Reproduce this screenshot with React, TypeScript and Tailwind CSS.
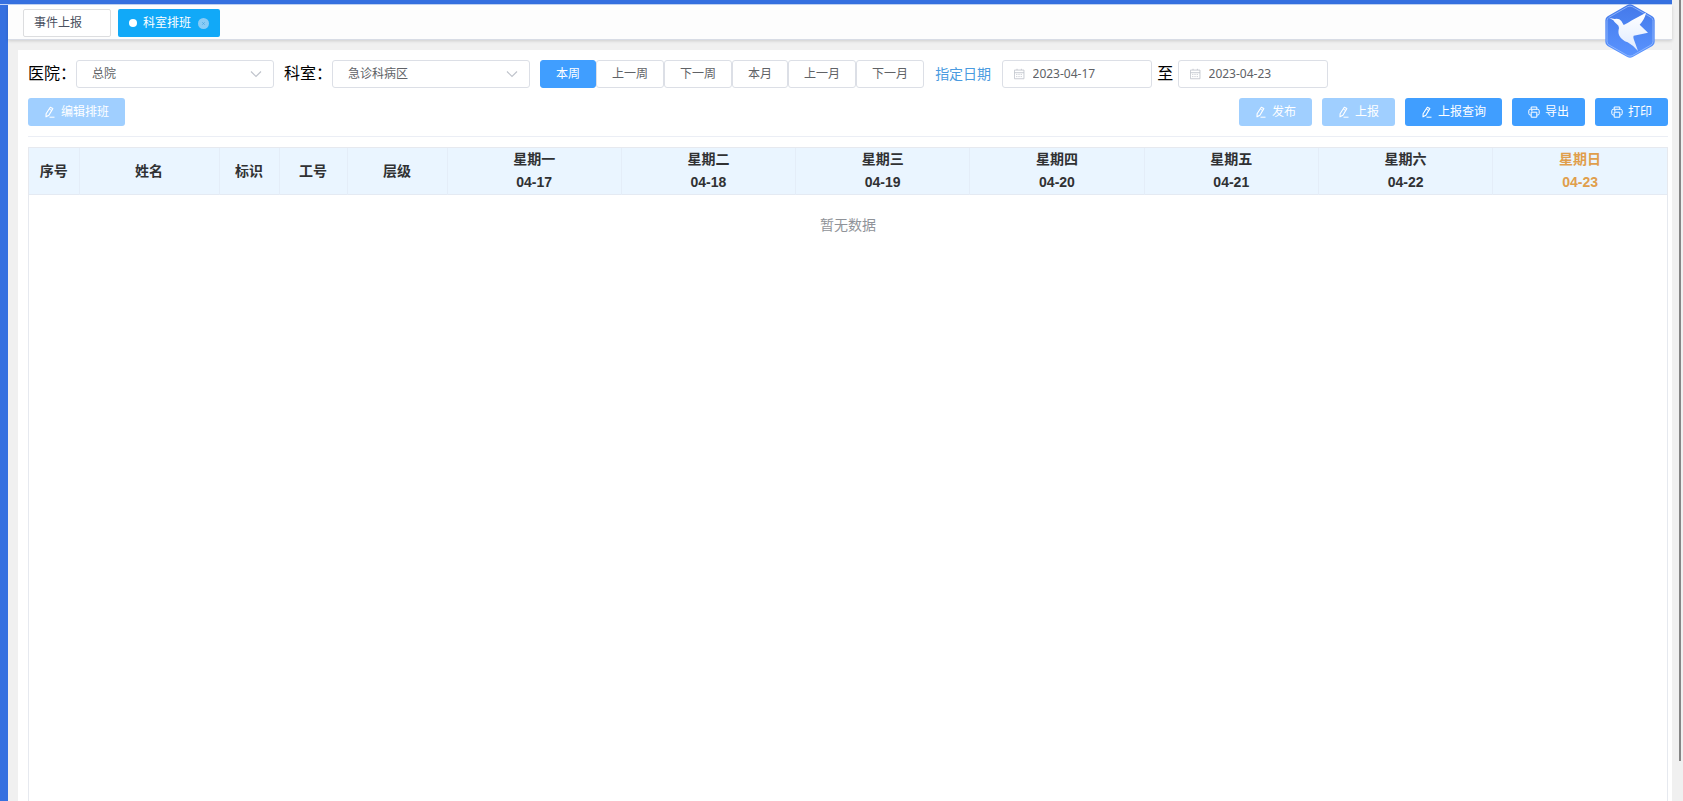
import { useState } from "react";
import type { ReactNode } from "react";

type Day = { week: string; date: string; rest?: boolean };

const DAYS: Day[] = [
  { week: "星期一", date: "04-17" },
  { week: "星期二", date: "04-18" },
  { week: "星期三", date: "04-19" },
  { week: "星期四", date: "04-20" },
  { week: "星期五", date: "04-21" },
  { week: "星期六", date: "04-22" },
  { week: "星期日", date: "04-23", rest: true },
];

const BASE_COLS = [
  { title: "序号", width: "w-[50px]" },
  { title: "姓名", width: "w-[140px]" },
  { title: "标识", width: "w-[60px]" },
  { title: "工号", width: "w-[68px]" },
  { title: "层级", width: "w-[100px]" },
];

const RANGES = ["本周", "上一周", "下一周", "本月", "上一月", "下一月"];

function EditIcon() {
  return (
    <svg viewBox="0 0 12 12" className="size-3" fill="none" stroke="currentColor" strokeLinejoin="round">
      <path d="M6.3 1.2 8.8 2.6 4.9 9.2 2 10.8 2.1 7.8Z" strokeWidth="1.1" />
      <path d="M5.4 3.2 7.8 4.5M5.5 11.2H10.5" />
    </svg>
  );
}

function PrinterIcon() {
  return (
    <svg viewBox="0 0 12 12" className="size-3" fill="none" stroke="currentColor" strokeLinejoin="round">
      <path d="M3.2 3.3V1h5.6v2.3M3.2 9H2.3Q.8 9 .8 7.5V4.8Q.8 3.3 2.3 3.3h7.4q1.5 0 1.5 1.5v2.7Q11.2 9 9.7 9h-.9" />
      <path d="M3.2 6.2h5.6v5H3.2zM3 4.8h1.6" />
    </svg>
  );
}

function CalendarIcon() {
  return (
    <svg viewBox="0 0 12 12" className="size-3" fill="none" stroke="currentColor">
      <path d="M.5 1.5h11v10H.5zM.5 4.5h11" />
      <path d="M3.5 0v2.5M8.5 0v2.5M2.5 6.5h7M2.5 9h7" strokeDasharray="1.4 1.2" />
    </svg>
  );
}

function Logo() {
  return (
    <svg viewBox="0 0 150 162" className="h-[54px] w-[50px]">
      <defs>
        <linearGradient id="hex" x1="0" y1="0" x2="0" y2="1">
          <stop offset="0" stopColor="#4479ea" />
          <stop offset="1" stopColor="#5a94ff" />
        </linearGradient>
        <linearGradient id="wing" x1="0" y1="0" x2="0" y2="1">
          <stop offset="0" stopColor="#ffffff" />
          <stop offset="1" stopColor="#dfeaff" />
        </linearGradient>
      </defs>
      <path
        d="M67 3q8-4 16 0l59 34q7 4 7 12v65q0 8-7 12l-59 33q-8 4-16 0L8 126q-7-4-7-12V49q0-8 7-12Z"
        fill="url(#hex)"
      />
      <path
        d="M68 8q7-3 14 0l56 32q6 4 6 10v62q0 7-6 11l-56 32q-7 3-14 0l-56-32q-6-4-6-11V50q0-6 6-10Z"
        fill="none"
        stroke="#a9c8ff"
        strokeWidth="2"
      />
      <path
        d="M13 42 29 45Q42 42 49 51L56 63Q68 58 81 49L123 26Q120 44 104 62L129 86Q108 90 86 95 84 98 86 105 93 124 99 141 83 123 68 115 50 108 43 95 38 86 42 72 42 64 35 60 29 56 25 49Z"
        fill="url(#wing)"
      />
    </svg>
  );
}

function Select({ id, label, options }: { id: string; label: string; options: string[] }) {
  return (
    <div className="flex items-center">
      <label htmlFor={id} className="text-base leading-7 text-black">
        {label}
      </label>
      <div className="relative">
        <select
          id={id}
          className="block h-7 w-[198px] appearance-none rounded-[3px] border border-[#dcdfe6] bg-white pr-8 pl-[15px] text-xs text-[#606266]"
        >
          {options.map((o) => (
            <option key={o}>{o}</option>
          ))}
        </select>
        <svg
          viewBox="0 0 12 12"
          className="pointer-events-none absolute top-2 right-3 size-3"
          fill="none"
          stroke="#c0c4cc"
        >
          <path d="M1 3.5 6 8.5l5-5" strokeWidth="1.2" />
        </svg>
      </div>
    </div>
  );
}

function DateInput({ label, defaultValue }: { label: string; defaultValue: string }) {
  return (
    <div className="flex h-7 w-[150px] items-center gap-2 rounded-[3px] border border-[#dcdfe6] pl-[11px] text-[#c0c4cc]">
      <CalendarIcon />
      <input
        type="text"
        aria-label={label}
        defaultValue={defaultValue}
        className="w-full min-w-0 bg-transparent font-['Noto_Sans',sans-serif] text-xs text-[#606266] outline-none"
      />
    </div>
  );
}

function ActionButton({ icon, disabled, children }: { icon: ReactNode; disabled?: boolean; children: ReactNode }) {
  return (
    <button
      type="button"
      disabled={disabled}
      className="flex h-7 items-center gap-[5px] rounded-[3px] bg-[#409eff] px-4 text-xs text-white disabled:bg-[#a0cfff]"
    >
      {icon}
      {children}
    </button>
  );
}

export default function App() {
  const [range, setRange] = useState("本周");

  return (
    <div className="flex min-h-screen bg-[#f0f0f0] font-['Liberation_Sans','Noto_Sans_CJK_SC',sans-serif]">
      <div className="relative flex min-w-0 flex-1 flex-col">
        <div className="h-[5px] border-b border-[#c3d5f6] bg-[#3570e0]" />

        <div className="flex flex-1">
          <div className="w-2 shrink-0 bg-[#3570e0]" />

          <div className="flex min-w-0 flex-1 flex-col">
            {/* page tabs */}
            <nav className="flex h-[35px] items-start gap-[7px] border-b border-[#d8dce5] bg-[#fdfdfd] pt-1 pl-[15px] text-xs shadow-[0_1px_3px_rgba(0,0,0,0.15)]">
              <a
                href="#report"
                className="flex h-7 w-[88px] items-center rounded-[2px] border border-[#dcdddf] bg-white pl-2.5 text-[#495060]"
              >
                事件上报
              </a>
              <a
                href="#schedule"
                className="flex h-7 w-[102px] items-center rounded-[2px] bg-[#11a9f8] pl-[11px] text-white"
              >
                <span className="mr-1.5 size-2 rounded-full bg-white" />
                科室排班
                <svg viewBox="0 0 11 11" className="ml-[7px] size-[11px]">
                  <circle cx="5.5" cy="5.5" r="5.5" fill="#8accf6" />
                  <path d="m4.3 4.3 2.4 2.4M6.7 4.3 4.3 6.7" stroke="#4aa6e0" strokeWidth="0.8" />
                </svg>
              </a>
            </nav>

            <main className="mt-2.5 ml-2.5 flex flex-1 flex-col bg-white pt-2.5 pr-1 pl-2.5">
              {/* filters */}
              <div className="flex flex-wrap items-center gap-2.5">
                <Select id="hospital" label="医院：" options={["总院"]} />
                <Select id="dept" label="科室：" options={["急诊科病区"]} />

                <div className="flex">
                  {RANGES.map((r) => (
                    <button
                      key={r}
                      type="button"
                      onClick={() => setRange(r)}
                      className={
                        r === range
                          ? "h-7 rounded-[3px] border border-[#409eff] bg-[#409eff] px-[15px] text-xs text-white"
                          : "h-7 rounded-[3px] border border-[#dcdfe6] bg-white px-[15px] text-xs text-[#606266]"
                      }
                    >
                      {r}
                    </button>
                  ))}
                </div>

                <a href="#date" className="px-px text-sm text-[#4a9be0]">
                  指定日期
                </a>
                <div className="flex items-center gap-[5px]">
                  <DateInput label="开始日期" defaultValue="2023-04-17" />
                  <span className="text-base leading-7 text-black">至</span>
                  <DateInput label="结束日期" defaultValue="2023-04-23" />
                </div>
              </div>

              {/* actions */}
              <div className="mt-2.5 flex items-center gap-2.5 border-b border-[#ebeef5] pb-2.5">
                <ActionButton icon={<EditIcon />} disabled>
                  编辑排班
                </ActionButton>
                <div className="ml-auto flex gap-2.5">
                  <ActionButton icon={<EditIcon />} disabled>
                    发布
                  </ActionButton>
                  <ActionButton icon={<EditIcon />} disabled>
                    上报
                  </ActionButton>
                  <ActionButton icon={<EditIcon />}>上报查询</ActionButton>
                  <ActionButton icon={<PrinterIcon />}>导出</ActionButton>
                  <ActionButton icon={<PrinterIcon />}>打印</ActionButton>
                </div>
              </div>

              {/* schedule */}
              <div className="mt-2.5 flex-1 border-x border-t border-[#e6e9ef]">
                <table className="w-full table-fixed text-center text-sm">
                  <thead className="bg-[#eaf5ff] text-[#303133]">
                    <tr className="border-b border-[#e4eaf3]">
                      {BASE_COLS.map((c) => (
                        <th key={c.title} className={`${c.width} border-r border-[#e4edf8] p-0 font-bold`}>
                          {c.title}
                        </th>
                      ))}
                      {DAYS.map((d) => (
                        <th
                          key={d.date}
                          className={
                            d.rest
                              ? "p-0 leading-[23px] font-bold text-[#e09e4c]"
                              : "border-r border-[#e4edf8] p-0 leading-[23px] font-bold"
                          }
                        >
                          <div>{d.week}</div>
                          <div>{d.date}</div>
                        </th>
                      ))}
                    </tr>
                  </thead>
                  <tbody>
                    <tr className="h-[60px]">
                      <td colSpan={BASE_COLS.length + DAYS.length} className="p-0 text-[#909399]">
                        暂无数据
                      </td>
                    </tr>
                  </tbody>
                </table>
              </div>
            </main>
          </div>
        </div>

        <div className="absolute top-1 right-[17px]">
          <Logo />
        </div>
      </div>

      {/* window edge */}
      <div className="flex w-[11px] shrink-0 justify-end pr-0.5">
        <div className="h-[95vh] w-0.5 bg-[#858585]" />
      </div>
    </div>
  );
}
